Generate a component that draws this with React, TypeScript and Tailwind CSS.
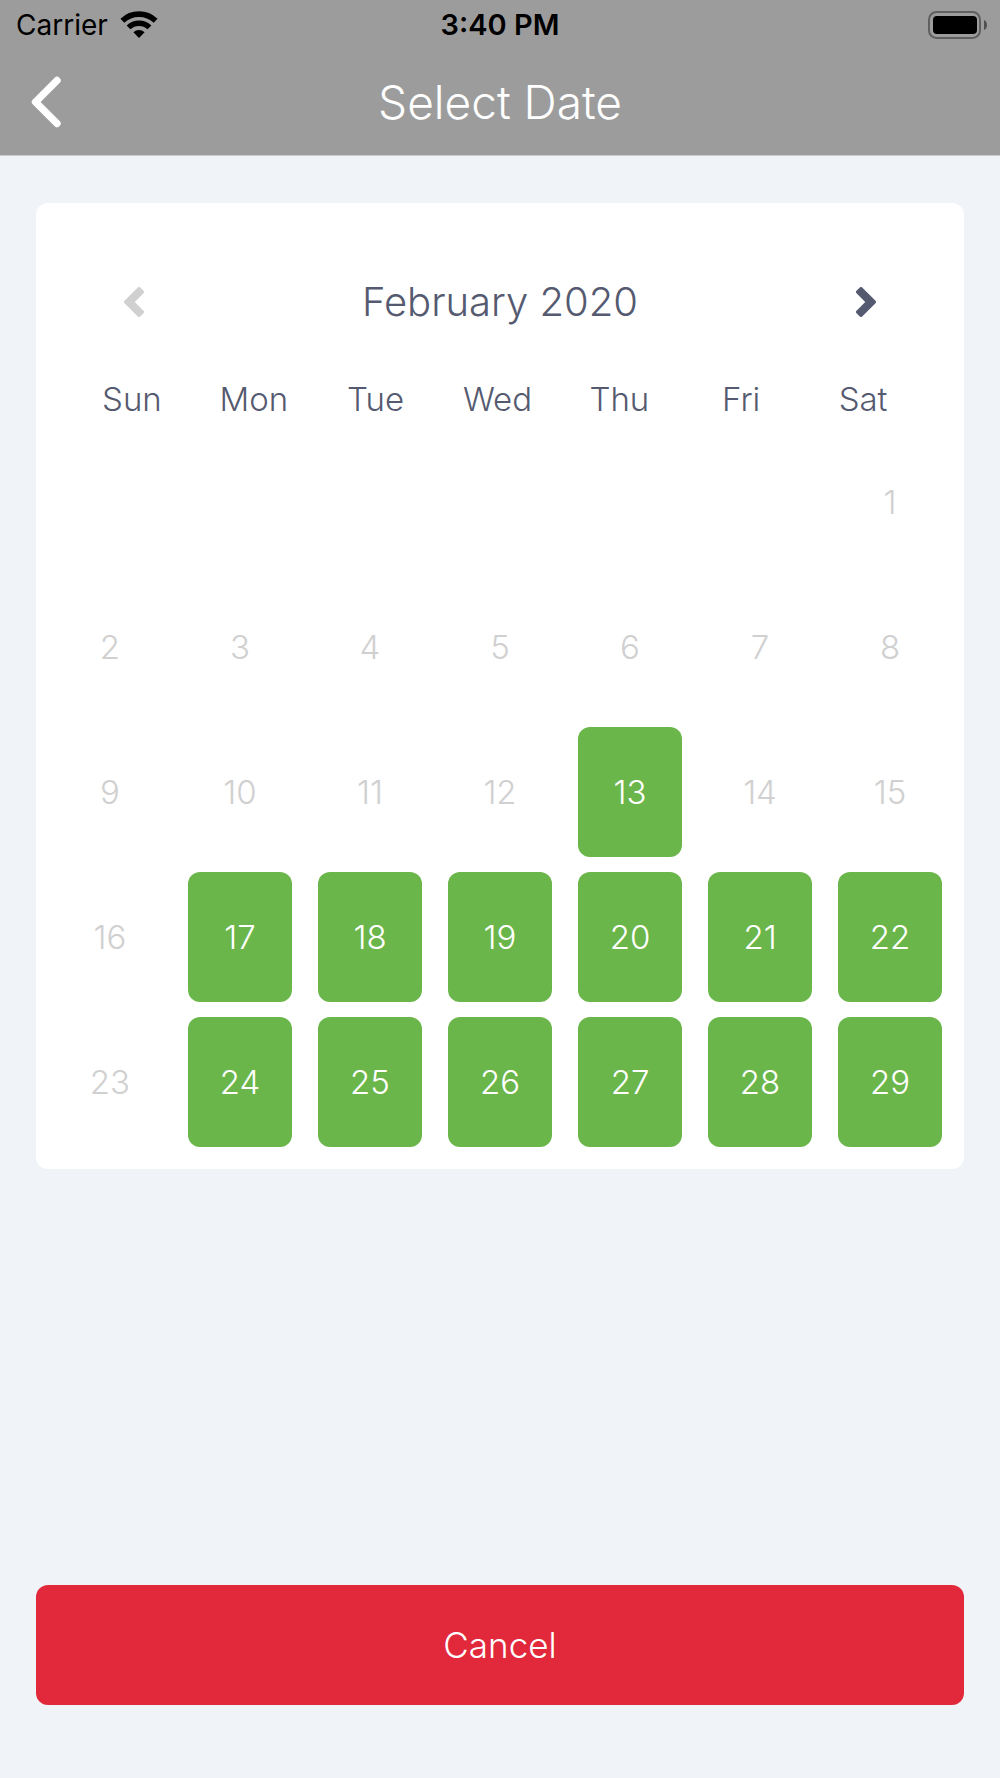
import React, { useState } from "react";
import clsx from "clsx";

const WEEKDAYS = ["Sun", "Mon", "Tue", "Wed", "Thu", "Fri", "Sat"];

// February 2020 starts on a Saturday
const LEADING_BLANKS = 6;
const DAYS_IN_MONTH = 29;

const isAvailable = (day: number) => day === 13 || (day > 16 && day !== 23);

const WifiIcon = () => (
  <svg width="38" height="28" viewBox="0 0 38 28" fill="none" aria-hidden="true">
    <path d="M2.4 9.8 A24 24 0 0 1 35.6 9.8" stroke="black" strokeWidth="5.6" />
    <path d="M8.5 16.4 A15.2 15.2 0 0 1 29.5 16.4" stroke="black" strokeWidth="5.4" />
    <path d="M19 27 L13.4 21.2 A8 8 0 0 1 24.6 21.2 Z" fill="black" />
  </svg>
);

const BatteryIcon = () => (
  <svg width="60" height="28" viewBox="0 0 60 28" fill="none" aria-hidden="true">
    <rect x="1" y="1" width="51" height="26" rx="7.5" stroke="#606060" strokeWidth="2" />
    <rect x="5" y="5" width="44" height="18" rx="4" fill="black" />
    <path d="M56 9 C60 10.5 60 17.5 56 19 Z" fill="#505050" />
  </svg>
);

const BackIcon = () => (
  <svg width="30" height="52" viewBox="0 0 30 52" fill="none" aria-hidden="true">
    <path
      d="M26 4.5 L4.5 26 L26 47.5"
      stroke="white"
      strokeWidth="7.4"
      strokeLinecap="round"
      strokeLinejoin="round"
    />
  </svg>
);

const MonthArrow = ({ flipped = false }: { flipped?: boolean }) => (
  <svg
    width="20"
    height="30"
    viewBox="0 0 20 30"
    aria-hidden="true"
    className={clsx(flipped && "rotate-180")}
  >
    <path
      d="M1.7 15 L15 1.7 L18.3 5 L8.3 15 L18.3 25 L15 28.3 Z"
      fill="currentColor"
      stroke="currentColor"
      strokeWidth="3.4"
      strokeLinejoin="round"
    />
  </svg>
);

const Header = () => (
  <header className="bg-[#9c9c9c] border-b border-[#c8cacb]">
    <div className="grid grid-cols-[1fr_auto_1fr] items-center h-[50px] px-3 text-black text-[28px] leading-8">
      <div className="flex items-center gap-3 pl-1">
        <span>Carrier</span>
        <WifiIcon />
      </div>
      <span className="text-[29px] font-semibold">3:40 PM</span>
      <div className="flex justify-end">
        <BatteryIcon />
      </div>
    </div>
    <div className="grid grid-cols-[1fr_auto_1fr] items-center h-[105px] px-[31px] pb-0.5">
      <button type="button" aria-label="Back" className="justify-self-start">
        <BackIcon />
      </button>
      <h1 className="text-white text-[46px] leading-[52px] font-light">Select Date</h1>
    </div>
  </header>
);

const Calendar = () => {
  const [selected, setSelected] = useState<number | null>(null);
  const days = Array.from({ length: DAYS_IN_MONTH }, (_, i) => i + 1);

  return (
    <section className="bg-white rounded-xl pt-[76px] pb-[22px]">
      <div className="flex items-center justify-between px-[88px] text-[#555a70]">
        <button type="button" aria-label="Previous month" disabled className="text-[#d0d0d0]">
          <MonthArrow />
        </button>
        <h2 className="text-[40px] leading-[46px] font-light">February 2020</h2>
        <button type="button" aria-label="Next month">
          <MonthArrow flipped />
        </button>
      </div>

      <div className="grid grid-cols-7 mt-[54px] pl-[35px] pr-10 text-center text-[#555a70] text-[33px] leading-10 font-light">
        {WEEKDAYS.map((name) => (
          <span key={name}>{name}</span>
        ))}
      </div>

      <div className="grid grid-cols-7 gap-x-[26px] gap-y-[15px] mt-[18px] px-[22px]">
        {Array.from({ length: LEADING_BLANKS }, (_, i) => (
          <span key={`blank-${i}`} />
        ))}
        {days.map((day) => (
          <button
            key={day}
            type="button"
            disabled={!isAvailable(day)}
            aria-pressed={selected === day}
            onClick={() => setSelected(day)}
            className={clsx(
              "h-[130px] rounded-xl text-[33px] leading-10 font-light",
              isAvailable(day) ? "bg-[#6bb64a] text-white" : "text-[#d0d0d0]"
            )}
          >
            {day}
          </button>
        ))}
      </div>
    </section>
  );
};

const App = () => {
  return (
    <div className="min-h-screen flex flex-col bg-[#f0f4f8] font-[Inter,sans-serif]">
      <Header />
      <main className="flex-1 flex flex-col justify-between px-9 pt-[47px] pb-[73px]">
        <Calendar />
        <button
          type="button"
          className="w-full h-[120px] rounded-xl bg-[#e2293b] text-white text-[35px] leading-10 font-light"
        >
          Cancel
        </button>
      </main>
    </div>
  );
};

export default App;
